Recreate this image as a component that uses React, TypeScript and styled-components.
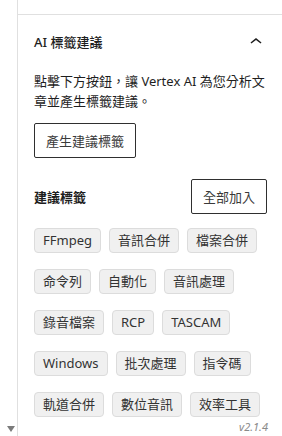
import React from 'react';
import styled, { createGlobalStyle } from 'styled-components';

const GlobalStyle = createGlobalStyle`
  html, body {
    margin: 0;
    padding: 0;
    background: #fff;
  }
  body {
    font-family: "Noto Sans", "Noto Sans CJK TC", sans-serif;
    color: #1e1e1e;
  }
`;

const Frame = styled.div`
  display: flex;
  width: 282px;
  height: 436px;
  overflow: hidden;
  background: #fff;
`;

const Gutter = styled.div`
  width: 18px;
  flex-shrink: 0;
  border-right: 1px solid #e0e0e0;
  display: flex;
  flex-direction: column;
  justify-content: flex-end;
  align-items: center;
  padding-bottom: 4px;
  box-sizing: border-box;
`;

const ScrollArrow = styled.div`
  width: 0;
  height: 0;
  border-left: 4px solid transparent;
  border-right: 4px solid transparent;
  border-top: 6px solid #7b7b7b;
  margin-left: 5px;
`;

const Sidebar = styled.div`
  flex: 1;
  display: flex;
  flex-direction: column;
  min-width: 0;
`;

const TopStrip = styled.div`
  height: 14px;
  border-bottom: 1px solid #e0e0e0;
  flex-shrink: 0;
`;

const PanelHeader = styled.div`
  height: 53px;
  display: flex;
  align-items: center;
  justify-content: space-between;
  padding: 0 14px 0 16px;
`;

const PanelTitle = styled.h2`
  margin: 0;
  font-size: 13px;
  font-weight: 500;
  line-height: 20px;
  color: #1e1e1e;
`;

const PanelBody = styled.div`
  padding: 3px 15px 0 16px;
  display: flex;
  flex-direction: column;
`;

const Description = styled.p`
  margin: 0;
  font-size: 13px;
  line-height: 20px;
  white-space: nowrap;
  color: #1e1e1e;
`;

const OutlineButton = styled.button`
  font-family: inherit;
  font-size: 13px;
  line-height: 20px;
  height: 35px;
  padding: 0 11px;
  border: 1px solid #2f2f2f;
  border-radius: 2px;
  background: #fff;
  color: #3a3a3a;
  cursor: pointer;
  align-self: flex-start;
  margin-top: ${(p: { $top?: number }) => p.$top ?? 0}px;
`;

const SectionRow = styled.div`
  display: flex;
  align-items: center;
  justify-content: space-between;
  margin-top: 21px;
`;

const SectionLabel = styled.h3`
  margin: 0;
  font-size: 13px;
  font-weight: 600;
  line-height: 20px;
  color: #1e1e1e;
`;

const TagList = styled.div`
  display: flex;
  flex-wrap: wrap;
  column-gap: 8px;
  row-gap: 16px;
  margin-top: 14px;
`;

const Tag = styled.button`
  font-family: inherit;
  font-size: 13px;
  line-height: 17px;
  padding: 3px 8px;
  background: #f0f0f0;
  border: 1px solid #dcdcdc;
  border-radius: 4px;
  color: #333;
  cursor: pointer;
`;

const Version = styled.div`
  align-self: flex-end;
  font-size: 11px;
  line-height: 13px;
  font-style: italic;
  color: #8a8a8a;
  margin-top: 3px;
  margin-right: -1px;
`;

const ChevronUp = () => (
  <svg width="24" height="24" viewBox="0 0 24 24" aria-hidden="true">
    <path d="M6.5 12.4L12 8l5.5 4.4-.9 1.2L12 10l-4.6 3.6-.9-1.2z" fill="#1e1e1e" />
  </svg>
);

const tags = [
  'FFmpeg', '音訊合併', '檔案合併',
  '命令列', '自動化', '音訊處理',
  '錄音檔案', 'RCP', 'TASCAM',
  'Windows', '批次處理', '指令碼',
  '軌道合併', '數位音訊', '效率工具',
];

export default function App() {
  return (
    <>
      <GlobalStyle />
      <Frame>
        <Gutter>
          <ScrollArrow />
        </Gutter>
        <Sidebar>
          <TopStrip />
          <PanelHeader>
            <PanelTitle>AI 標籤建議</PanelTitle>
            <ChevronUp />
          </PanelHeader>
          <PanelBody>
            <Description>
              點擊下方按鈕，讓 Vertex AI 為您分析文
              <br />
              章並產生標籤建議。
            </Description>
            <OutlineButton $top={12}>產生建議標籤</OutlineButton>
            <SectionRow>
              <SectionLabel>建議標籤</SectionLabel>
              <OutlineButton>全部加入</OutlineButton>
            </SectionRow>
            <TagList>
              {tags.map((t) => (
                <Tag key={t}>{t}</Tag>
              ))}
            </TagList>
            <Version>v2.1.4</Version>
          </PanelBody>
        </Sidebar>
      </Frame>
    </>
  );
}
